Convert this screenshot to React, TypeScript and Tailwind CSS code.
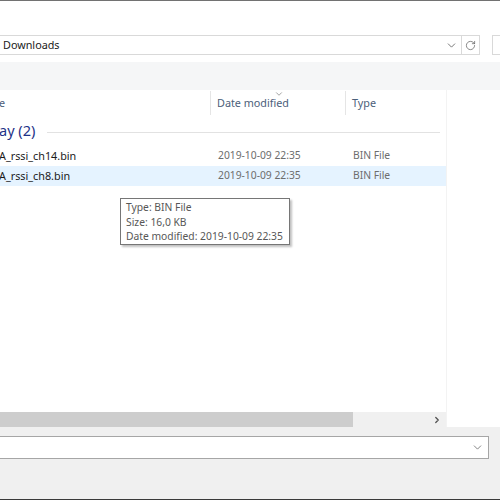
import { ChevronDown, ChevronRight, RotateCw } from 'lucide-react';

const FONT = { fontFamily: '"Segoe UI", "Noto Sans", "Liberation Sans", sans-serif' };

const FILES = [
    { name: 'A_rssi_ch14.bin', date: '2019-10-09 22:35', type: 'BIN File', hover: false },
    { name: 'A_rssi_ch8.bin', date: '2019-10-09 22:35', type: 'BIN File', hover: true },
];

export default function App() {
    return (
        <div className="relative w-[500px] h-[500px] overflow-hidden bg-white flex flex-col text-[10.3px]" style={FONT}>
            <div className="h-px bg-[#727272]" />
            <div className="h-[34px]" />

            {/* address bar */}
            <div className="h-[20px] flex">
                <div className="w-[463px] -ml-px border border-[#d9d9d9] flex items-center pl-[3px] text-[#1a1a1a] text-[10.8px]">
                    <span className="flex-1">Downloads</span>
                    <ChevronDown size={13} strokeWidth={1.5} className="text-[#5a5a5a] mr-[3px]" />
                </div>
                <div className="w-[19px] -ml-px border border-[#d9d9d9] flex items-center justify-center">
                    <RotateCw size={11} strokeWidth={1.6} className="text-[#606060]" />
                </div>
                <div className="w-[12px]" />
                <div className="flex-1 border border-[#d9d9d9] border-r-0" />
            </div>
            <div className="h-[7px]" />

            {/* command band */}
            <div className="h-[28px] bg-[#f5f6f7]" />

            <div className="flex-1 flex min-h-0">
                <div className="w-[446px] flex flex-col">
                    {/* column header */}
                    <div className="relative h-[25px] flex text-[#4c607a] text-[10.8px] pt-[1px]">
                        <div className="w-[212px] flex items-center -ml-[1px] border-r border-[#e5e5e5]">e</div>
                        <div className="w-[135px] flex items-center pl-[6px] border-r border-[#e5e5e5]">Date modified</div>
                        <div className="flex items-center pl-[6px]">Type</div>
                        <ChevronDown size={10} strokeWidth={2.2} className="absolute left-[274px] top-[-1px] text-[#9a9a9a]" />
                    </div>

                    {/* group header */}
                    <div className="h-[30px] flex items-center pt-[2px]">
                        <span className="text-[14.5px] text-[#1e3287] -ml-[1px]">ay (2)</span>
                        <div className="flex-1 h-px bg-[#e2e2e2] ml-[12px] mr-[6px] mt-[3px]" />
                    </div>

                    <div className="h-px" />
                    {FILES.map((f) => (
                        <div key={f.name} className={`h-[20px] flex items-center ${f.hover ? 'bg-[#e5f3ff]' : ''}`}>
                            <div className="w-[212px] text-[#1a1a1a] -ml-[1px] text-[10.8px]">{f.name}</div>
                            <div className="w-[135px] pl-[7px] text-[#6d6d6d]">{f.date}</div>
                            <div className="pl-[7px] text-[#6d6d6d]">{f.type}</div>
                        </div>
                    ))}

                    <div className="flex-1" />
                    {/* horizontal scrollbar */}
                    <div className="h-[15px] bg-[#f0f0f0] flex items-center">
                        <div className="w-[353px] h-full bg-[#cdcdcd]" />
                        <div className="flex-1" />
                        <ChevronRight size={10} strokeWidth={3} className="text-[#505050] mr-[4px]" />
                    </div>
                </div>
                {/* preview pane */}
                <div className="flex-1 border-l border-[#f3f3f3] bg-white" />
            </div>

            {/* bottom area */}
            <div className="h-[73px] bg-[#f0f0f0] flex flex-col">
                <div className="h-[9px]" />
                <div className="h-[23px] w-[490px] -ml-px border border-[#a6a6a6] bg-white flex items-center justify-end pr-[4px]">
                    <ChevronDown size={13} strokeWidth={1.5} className="text-[#6a6a6a]" />
                </div>
                <div className="flex-1" />
                <div className="h-px bg-[#3a3a3a]" />
            </div>

            {/* tooltip */}
            <div className="absolute left-[120px] top-[198px] w-[170px] h-[47px] bg-white border border-[#767676] shadow-[2px_2px_2px_rgba(0,0,0,0.25)] px-[5px] pt-[1px] text-[#575757] leading-[14.5px] whitespace-nowrap">
                <div>Type: BIN File</div>
                <div>Size: 16,0 KB</div>
                <div>Date modified: 2019-10-09 22:35</div>
            </div>
        </div>
    );
}
